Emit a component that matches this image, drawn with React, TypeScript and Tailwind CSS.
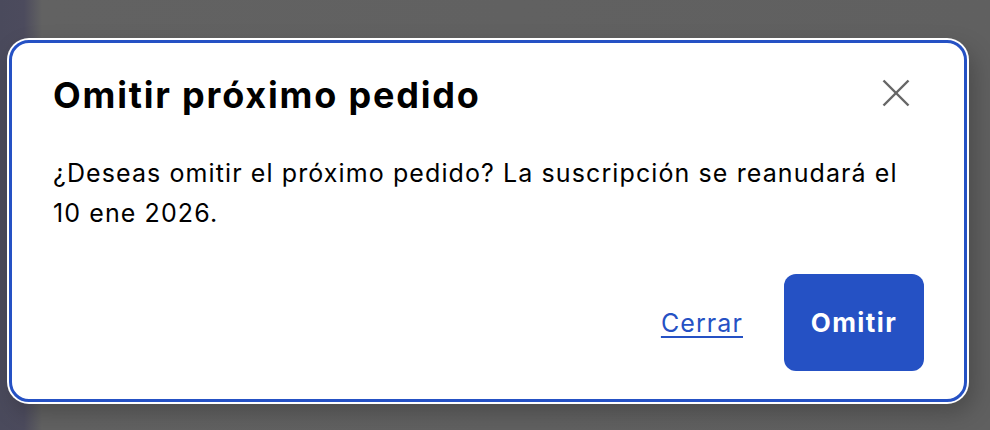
import React from "react";

export default function App() {
  return (
    <div
      className="w-[990px] h-[430px] overflow-hidden bg-[linear-gradient(to_right,#4a4a5c_0px,#4c4b5d_24px,#626262_42px,#606060_100%)] pt-[40px] pl-[9px]"
      style={{ fontFamily: "Inter, 'Noto Sans', sans-serif" }}
    >
      <div className="w-[958px] h-[362px] rounded-[20px] border-[3px] border-[#2551c4] bg-white ring-2 ring-white shadow-[6px_10px_24px_rgba(0,0,0,0.25)] flex flex-col pt-[31px] pl-[41px] pr-[40px] pb-[28px]">
        <div className="flex justify-between items-start">
          <h2 className="text-[36px] leading-[43px] font-bold text-black tracking-[1.8px] whitespace-nowrap">
            Omitir próximo pedido
          </h2>
          <button className="w-[56px] h-[56px] -mt-[9px] flex items-center justify-center text-[#666666]">
            <svg width="28" height="28" viewBox="0 0 28 28" fill="none" stroke="currentColor" strokeWidth="2.4">
              <line x1="1.5" y1="1.5" x2="26.5" y2="26.5" />
              <line x1="26.5" y1="1.5" x2="1.5" y2="26.5" />
            </svg>
          </button>
        </div>
        <p className="mt-[32px] text-[25px] leading-[40px] text-black tracking-[1.1px] max-w-[862px]">
          ¿Deseas omitir el próximo pedido? La suscripción se reanudará el 10 ene 2026.
        </p>
        <div className="mt-auto flex items-center justify-end gap-[41px]">
          <a
            href="#"
            className="text-[25px] leading-[30px] text-[#2551c4] tracking-[1.1px] underline underline-offset-[4px] decoration-[1.5px]"
          >
            Cerrar
          </a>
          <button className="w-[140px] h-[97px] rounded-[12px] bg-[#2551c4] text-white text-[26px] font-bold tracking-[1.4px]">
            Omitir
          </button>
        </div>
      </div>
    </div>
  );
}
